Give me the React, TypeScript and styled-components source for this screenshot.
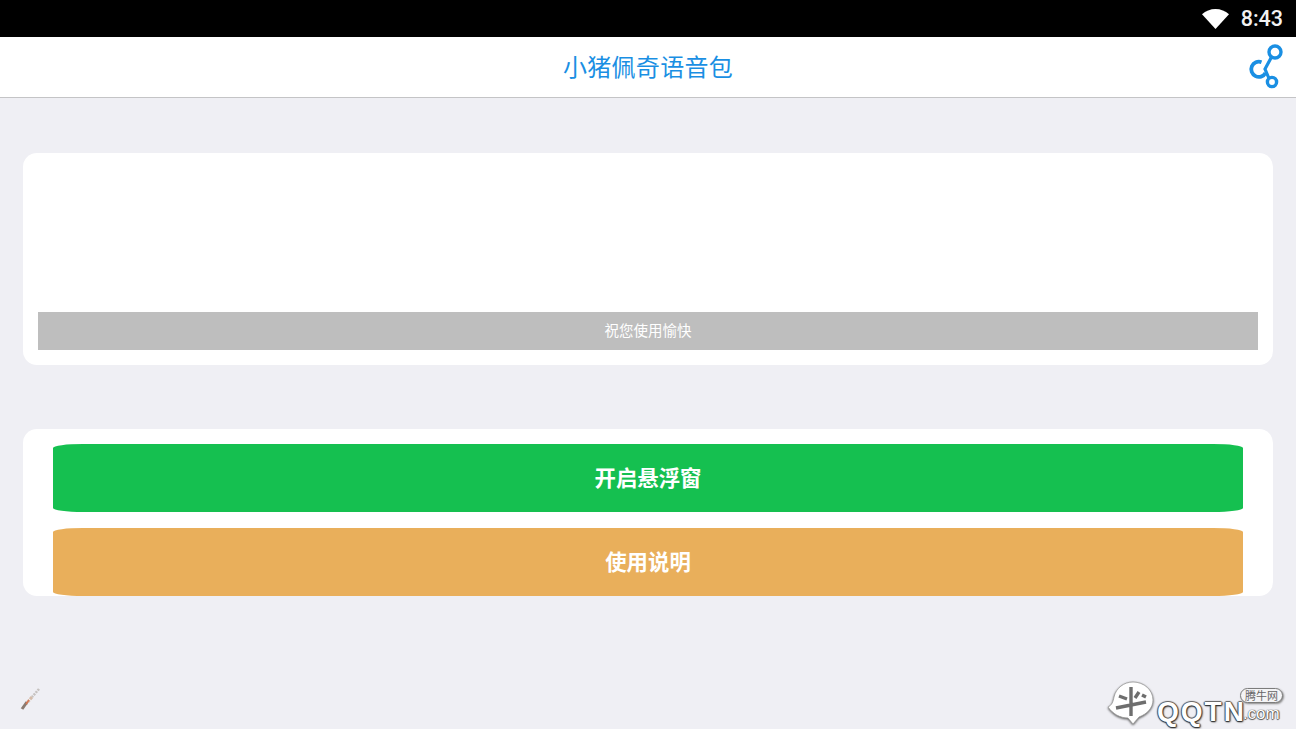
import React from "react";
import styled, { createGlobalStyle } from "styled-components";

const Global = createGlobalStyle`
  html, body { margin: 0; padding: 0; height: 100%; background: #efeff4; }
  body { font-family: "Roboto", "Noto Sans CJK SC", sans-serif; overflow: hidden; }
`;

const Page = styled.div`
  width: 1296px;
  height: 729px;
  background: #efeff4;
  overflow: hidden;
  display: flex;
  flex-direction: column;
`;

const StatusBar = styled.div`
  height: 37px;
  flex: none;
  background: #000;
  display: flex;
  align-items: center;
  justify-content: flex-end;
  gap: 12px;
  padding-right: 13px;
`;

const Clock = styled.span`
  color: #f2f2f2;
  font: 500 21.5px/37px "Roboto", sans-serif;
`;

const Header = styled.header`
  height: 60px;
  flex: none;
  background: #fff;
  border-bottom: 1px solid #c4c4c6;
  display: grid;
  grid-template-columns: 1fr auto 1fr;
  align-items: center;
  padding-right: 13px;
  padding-left: 13px;
`;

const Title = styled.h1`
  grid-column: 2;
  margin: -2px 0 0;
  color: #1a8fe3;
  font: 400 24px/60px "Noto Sans CJK SC", sans-serif;
  letter-spacing: 0.3px;
`;

const ShareButton = styled.div`
  grid-column: 3;
  justify-self: end;
  width: 36px;
  height: 46px;
`;

const Content = styled.main`
  padding: 55px 23px 0;
  display: flex;
  flex-direction: column;
  gap: 64px;
`;

const Card = styled.section`
  background: #fff;
  border-radius: 14px;
`;

const BannerCard = styled(Card)`
  height: 212px;
  box-sizing: border-box;
  padding: 159px 15px 15px;
`;

const Notice = styled.div`
  height: 38px;
  background: #bebebe;
  color: #fff;
  font: 400 14.5px/36px "Noto Sans CJK SC", sans-serif;
  text-align: center;
`;

const ActionCard = styled(Card)`
  height: 167px;
  box-sizing: border-box;
  padding: 15px 30px 0;
  display: flex;
  flex-direction: column;
  gap: 16px;
`;

const ActionButton = styled.button<{ $color: string }>`
  height: 68px;
  border: 0;
  padding: 0 0 3px;
  background: ${(p) => p.$color};
  border-radius: 30px / 4px;
  color: #fff;
  font: 700 21.4px/1 "Noto Sans CJK SC", sans-serif;
`;

const Footer = styled.footer`
  margin-top: auto;
  display: flex;
  justify-content: space-between;
  align-items: flex-end;
  padding: 0 4px 3px 20px;
`;

const Brush = styled.div`
  width: 21px;
  height: 25px;
  margin-bottom: 14px;
`;

const Watermark = styled.div`
  position: relative;
  width: 186px;
  height: 46px;
  display: flex;
  align-items: flex-end;
`;

const MarkSvg = styled.svg`
  flex: none;
  filter: drop-shadow(0 1px 1px #555);
`;

const WmLetters = styled.span`
  color: #fff;
  font: 700 28px/28px "Liberation Sans", sans-serif;
  letter-spacing: 2px;
  margin-left: 1px;
  text-shadow: 0 1px 1px #333, 1px 1px 2px #444, -1px 0 1px #555, 1px 0 1px #555, 0 -1px 1px #666;
`;

const WmCom = styled.span`
  color: #fff;
  font: 400 17px/20px "Liberation Sans", sans-serif;
  margin-left: -3px;
  margin-bottom: 2px;
  text-shadow: 0 0 1px #333, 0 1px 1px #555, 1px 0 1px #666;
`;

const WmBadge = styled.span`
  position: absolute;
  left: 134px;
  top: 8px;
  width: 43px;
  height: 15px;
  border-radius: 8px;
  background: #f4f4f6;
  border: 1px solid #7c7c7c;
  box-sizing: border-box;
  color: #666;
  font: 400 11px/13px "Noto Sans CJK SC", sans-serif;
  text-align: center;
  box-shadow: 1px 1px 2px #888;
`;

const WifiIcon = () => (
  <svg width="27" height="20" viewBox="0 0 27 20" aria-hidden="true">
    <path d="M0 5.2 C3.6 2 8.4 0 13.5 0 C18.6 0 23.4 2 27 5.2 L13.5 20 Z" fill="#fff" />
  </svg>
);

const ShareIcon = () => (
  <svg width="36" height="46" viewBox="0 0 36 46" fill="none" stroke="#1a8fe3" aria-hidden="true">
    <circle cx="28" cy="8" r="6" strokeWidth="3.4" />
    <circle cx="25" cy="38" r="4.6" strokeWidth="3.4" />
    <path d="M24.5 13 L18 25 L21.8 34" strokeWidth="3.2" />
    <path d="M14.5 18.2 A7.6 7.6 0 1 0 18.5 29" strokeWidth="3.8" />
  </svg>
);

const BrushIcon = () => (
  <svg width="21" height="25" viewBox="0 0 21 25" aria-hidden="true">
    <path d="M19 2 L12 10" stroke="#c6c2c0" strokeWidth="2.6" strokeDasharray="2 1" />
    <path d="M12 10 L6 17" stroke="#d4bcaa" strokeWidth="3" strokeDasharray="3 1" />
    <path d="M7 15 L2 22" stroke="#8a7a70" strokeWidth="3" />
    <path d="M9 13 L6 17" stroke="#d9734f" strokeWidth="1.3" />
  </svg>
);

const WmMark = () => (
  <MarkSvg width="50" height="46" viewBox="0 0 50 46" aria-hidden="true">
    <path d="M2 27 C6 25 7 22 8 17 C10 8 18 2 27 2 C38 2 47 10 47 20 C47 28 41 34 33 37 L27 44 L22 38 C14 38 7 34 2 27 Z" fill="#fff" stroke="#9a9a9a" strokeWidth="0.8" />
    <path d="M25 7 L25 36 M13 16 L21 19 M10 28 L40 22 M33 12 L29 18 M36 15 L40 17" stroke="#6e6e6e" strokeWidth="3.4" fill="none" />
  </MarkSvg>
);

export default function App() {
  return (
    <Page>
      <Global />
      <StatusBar>
        <WifiIcon />
        <Clock>8:43</Clock>
      </StatusBar>
      <Header>
        <Title>小猪佩奇语音包</Title>
        <ShareButton>
          <ShareIcon />
        </ShareButton>
      </Header>
      <Content>
        <BannerCard>
          <Notice>祝您使用愉快</Notice>
        </BannerCard>
        <ActionCard>
          <ActionButton $color="#15c050">开启悬浮窗</ActionButton>
          <ActionButton $color="#e9af5b">使用说明</ActionButton>
        </ActionCard>
      </Content>
      <Footer>
        <Brush>
          <BrushIcon />
        </Brush>
        <Watermark>
          <WmMark />
          <WmLetters>QQTN</WmLetters>
          <WmCom>.com</WmCom>
          <WmBadge>腾牛网</WmBadge>
        </Watermark>
      </Footer>
    </Page>
  );
}
